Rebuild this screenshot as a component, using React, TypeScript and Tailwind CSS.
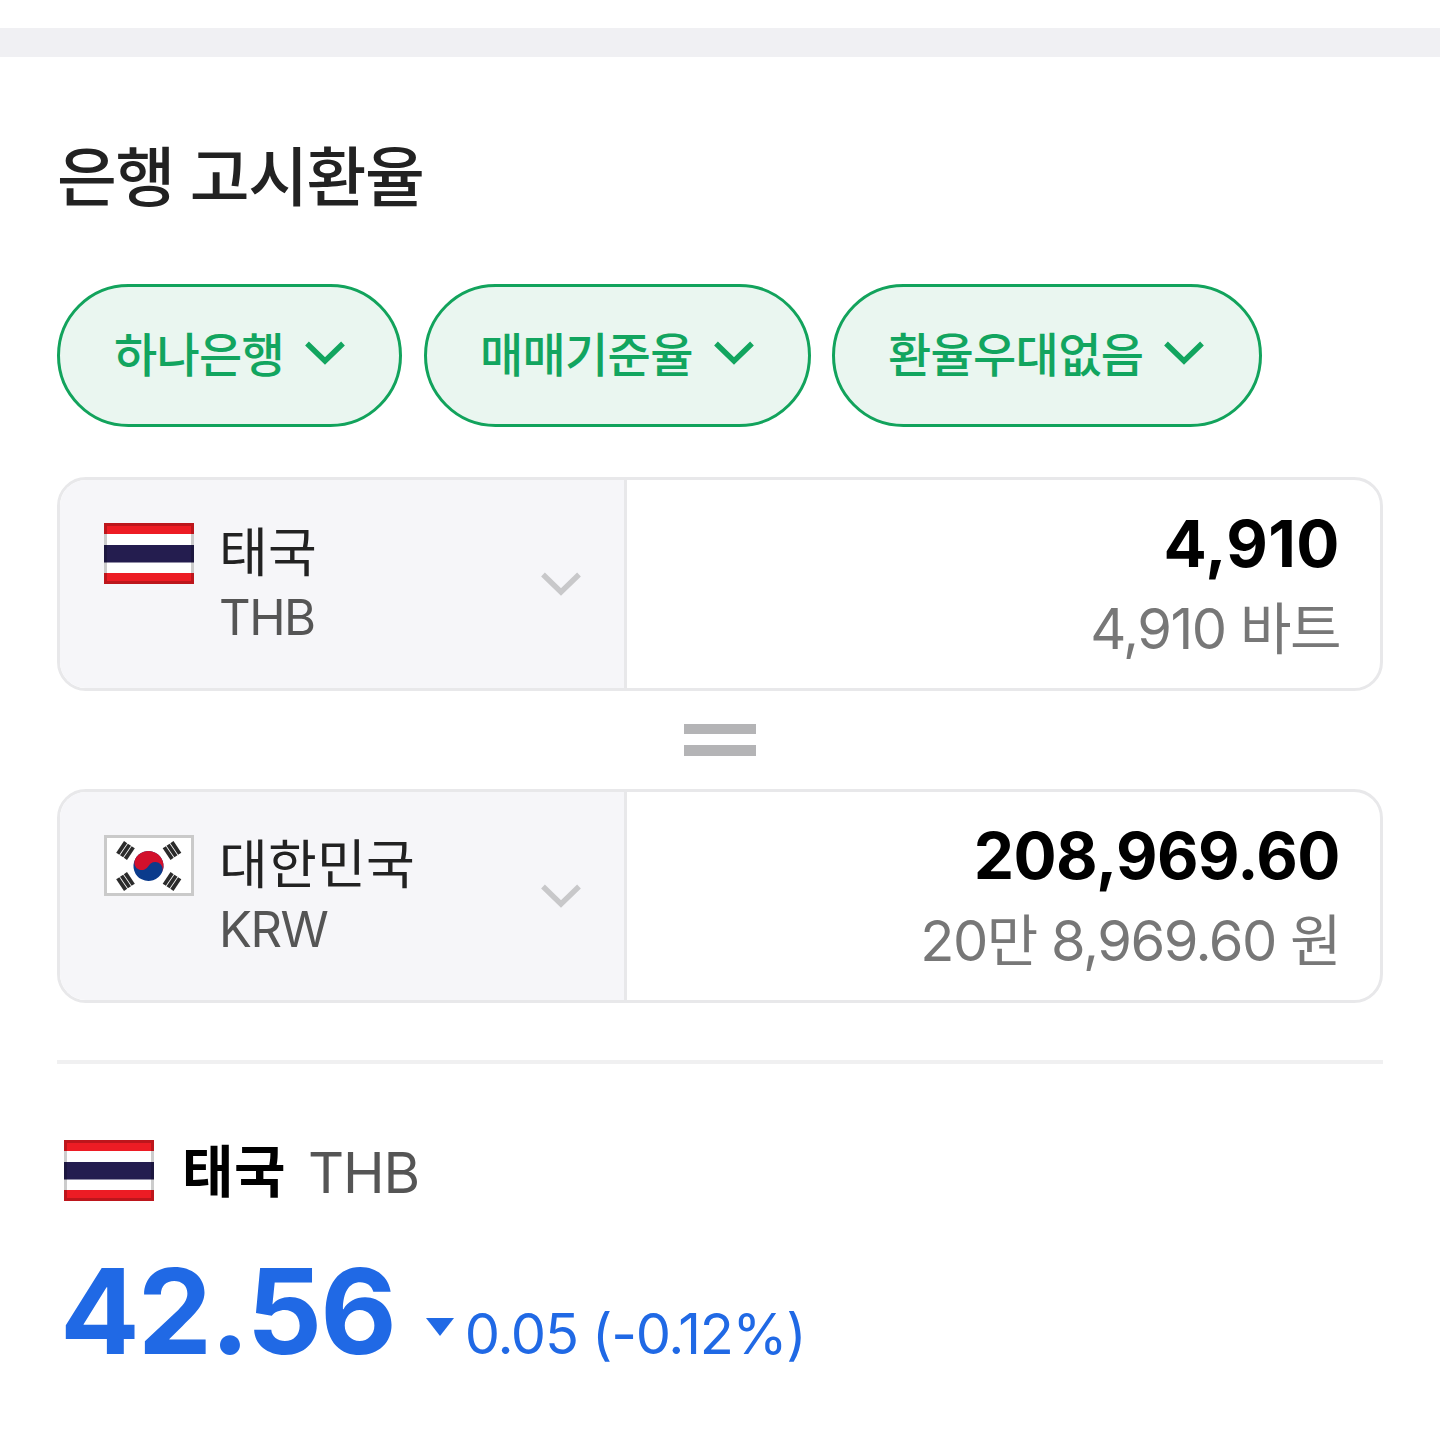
import { ReactNode } from "react";

function Chevron({ className }: { className: string }) {
  return (
    <svg viewBox="0 0 40 26" className={className} fill="none" stroke="currentColor" strokeWidth="5.4">
      <path d="M2 3.5 L20 21 L38 3.5" />
    </svg>
  );
}

function ThaiFlag() {
  return (
    <svg viewBox="0 0 90 61" className="h-[61px] w-[90px] shrink-0">
      <rect width="90" height="61" fill="#ed1c24" />
      <rect y="11" width="90" height="39" fill="#fff" />
      <rect y="22" width="90" height="17.5" fill="#241d4f" />
      <rect x="1.5" y="1.5" width="87" height="58" fill="none" stroke="#000" strokeOpacity="0.2" strokeWidth="3" />
    </svg>
  );
}

function Trigram({ x, y, angle }: { x: number; y: number; angle: number }) {
  return (
    <g transform={`translate(${x} ${y}) rotate(${angle})`} fill="#2b2b2b">
      <rect x="-7" y="-6.5" width="14" height="3.8" />
      <rect x="-7" y="-1.9" width="14" height="3.8" />
      <rect x="-7" y="2.7" width="14" height="3.8" />
    </g>
  );
}

function KoreanFlag() {
  return (
    <svg viewBox="0 0 90 61" className="h-[61px] w-[90px] shrink-0">
      <rect width="90" height="61" fill="#fff" />
      <g transform="rotate(27 44.5 31)">
        <circle cx="44.5" cy="31" r="15" fill="#0b3b8c" />
        <path d="M29.5 31 a15 15 0 0 1 30 0 a7.5 7.5 0 0 0 -15 0 a7.5 7.5 0 0 1 -15 0z" fill="#d2102c" />
      </g>
      <Trigram x={21.5} y={15.5} angle={-56} />
      <Trigram x={68} y={15.5} angle={56} />
      <Trigram x={21.5} y={46.5} angle={56} />
      <Trigram x={68} y={46.5} angle={-56} />
      <rect x="1.5" y="1.5" width="87" height="58" fill="none" stroke="#cacaca" strokeWidth="3" />
    </svg>
  );
}

function Chip({ label, className }: { label: string; className: string }) {
  return (
    <button
      className={`flex h-[143px] items-center rounded-full border-[3px] border-[#12a35c] bg-[#eaf6f0] text-[#12a55f] ${className}`}
    >
      <span className="-mt-[2px] text-[47px] leading-[60px] font-medium tracking-[-0.7px] whitespace-nowrap">
        {label}
      </span>
      <Chevron className="mt-[-6px] ml-[21px] h-[26px] w-[40px]" />
    </button>
  );
}

type CurrencyCardProps = {
  flag: ReactNode;
  name: string;
  code: string;
  amount: ReactNode;
  detail: ReactNode;
  amountClass: string;
};

function CurrencyCard({ flag, name, code, amount, detail, amountClass }: CurrencyCardProps) {
  return (
    <div className="flex h-[214px] overflow-hidden rounded-[29px] border-[3px] border-[#e8e8ea]">
      <div className="flex w-[567px] shrink-0 border-r-[3px] border-[#e8e8ea] bg-[#f6f6f9] pl-[44px]">
        <div className="pt-[43px]">{flag}</div>
        <div className="w-[347px] shrink-0 pt-[38px] pl-[25px]">
          <div className="text-[53px] leading-[70px] tracking-[0.2px] text-[#222]">{name}</div>
          <div className="text-[49px] leading-[60px] tracking-[-1.5px] text-[#555]">{code}</div>
        </div>
        <Chevron className="mt-[91px] h-[26px] w-[40px] shrink-0 text-[#c8c8ca]" />
      </div>
      <div className="flex flex-1 flex-col items-end pt-[25px] pr-[40px] whitespace-nowrap">
        <div className={`text-[64px] leading-[78px] font-bold text-black ${amountClass}`}>{amount}</div>
        <div className="mt-[7px] text-[56px] leading-[78px] tracking-[-1.5px] text-[#777]">{detail}</div>
      </div>
    </div>
  );
}

export default function App() {
  return (
    <div className="h-[1440px] w-[1440px] overflow-hidden bg-white pt-[28px] font-['Inter','Noto_Sans_CJK_KR',sans-serif]">
      <div className="h-[29px] bg-[#f0f0f3]" />
      <main className="px-[57px]">
        <h2 className="mt-[81px] h-[80px] text-[65px] leading-[80px] font-medium tracking-[-1.4px] whitespace-nowrap text-[#222]">
          은행 고시환율
        </h2>
        <div className="mt-[66px] flex">
          <Chip label="하나은행" className="w-[345px] pl-[54px]" />
          <Chip label="매매기준율" className="ml-[22px] w-[387px] pl-[53px]" />
          <Chip label="환율우대없음" className="ml-[21px] w-[430px] pl-[53px]" />
        </div>
        <div className="mt-[50px]">
          <CurrencyCard
            flag={<ThaiFlag />}
            name="태국"
            code="THB"
            amount="4,910"
            detail="4,910 바트"
            amountClass="tracking-[0.5px]"
          />
        </div>
        <div className="flex h-[98px] flex-col items-center gap-[11px] pt-[33px]">
          <div className="h-[10px] w-[72px] bg-[#b4b4b6]" />
          <div className="h-[11px] w-[72px] bg-[#b4b4b6]" />
        </div>
        <CurrencyCard
          flag={<KoreanFlag />}
          name="대한민국"
          code="KRW"
          amount="208,969.60"
          detail="20만 8,969.60 원"
          amountClass="tracking-[-0.5px]"
        />
        <div className="mt-[57px] h-[4px] bg-[#f0f0f1]" />
        <div className="mt-[75px] flex h-[62px] items-center pl-[7px] whitespace-nowrap">
          <ThaiFlag />
          <span className="mt-[4px] ml-[28px] text-[56px] leading-[62px] font-bold tracking-[0.5px] text-black">
            태국
          </span>
          <span className="mt-[5px] ml-[22px] text-[56px] leading-[62px] tracking-[-1.2px] text-[#555]">THB</span>
        </div>
        <div className="mt-[38px] flex items-baseline pl-[3px] whitespace-nowrap text-[#2069e5]">
          <span className="text-[118px] leading-[144px] font-bold tracking-[-2px]">42.56</span>
          <svg viewBox="0 0 28 18" className="ml-[31px] h-[18px] w-[28px] -translate-y-[18px]" fill="currentColor">
            <path d="M0 0H28L14 18Z" />
          </svg>
          <span className="ml-[11px] text-[56px] leading-[70px] tracking-[-1.3px]">0.05 (-0.12%)</span>
        </div>
      </main>
    </div>
  );
}
